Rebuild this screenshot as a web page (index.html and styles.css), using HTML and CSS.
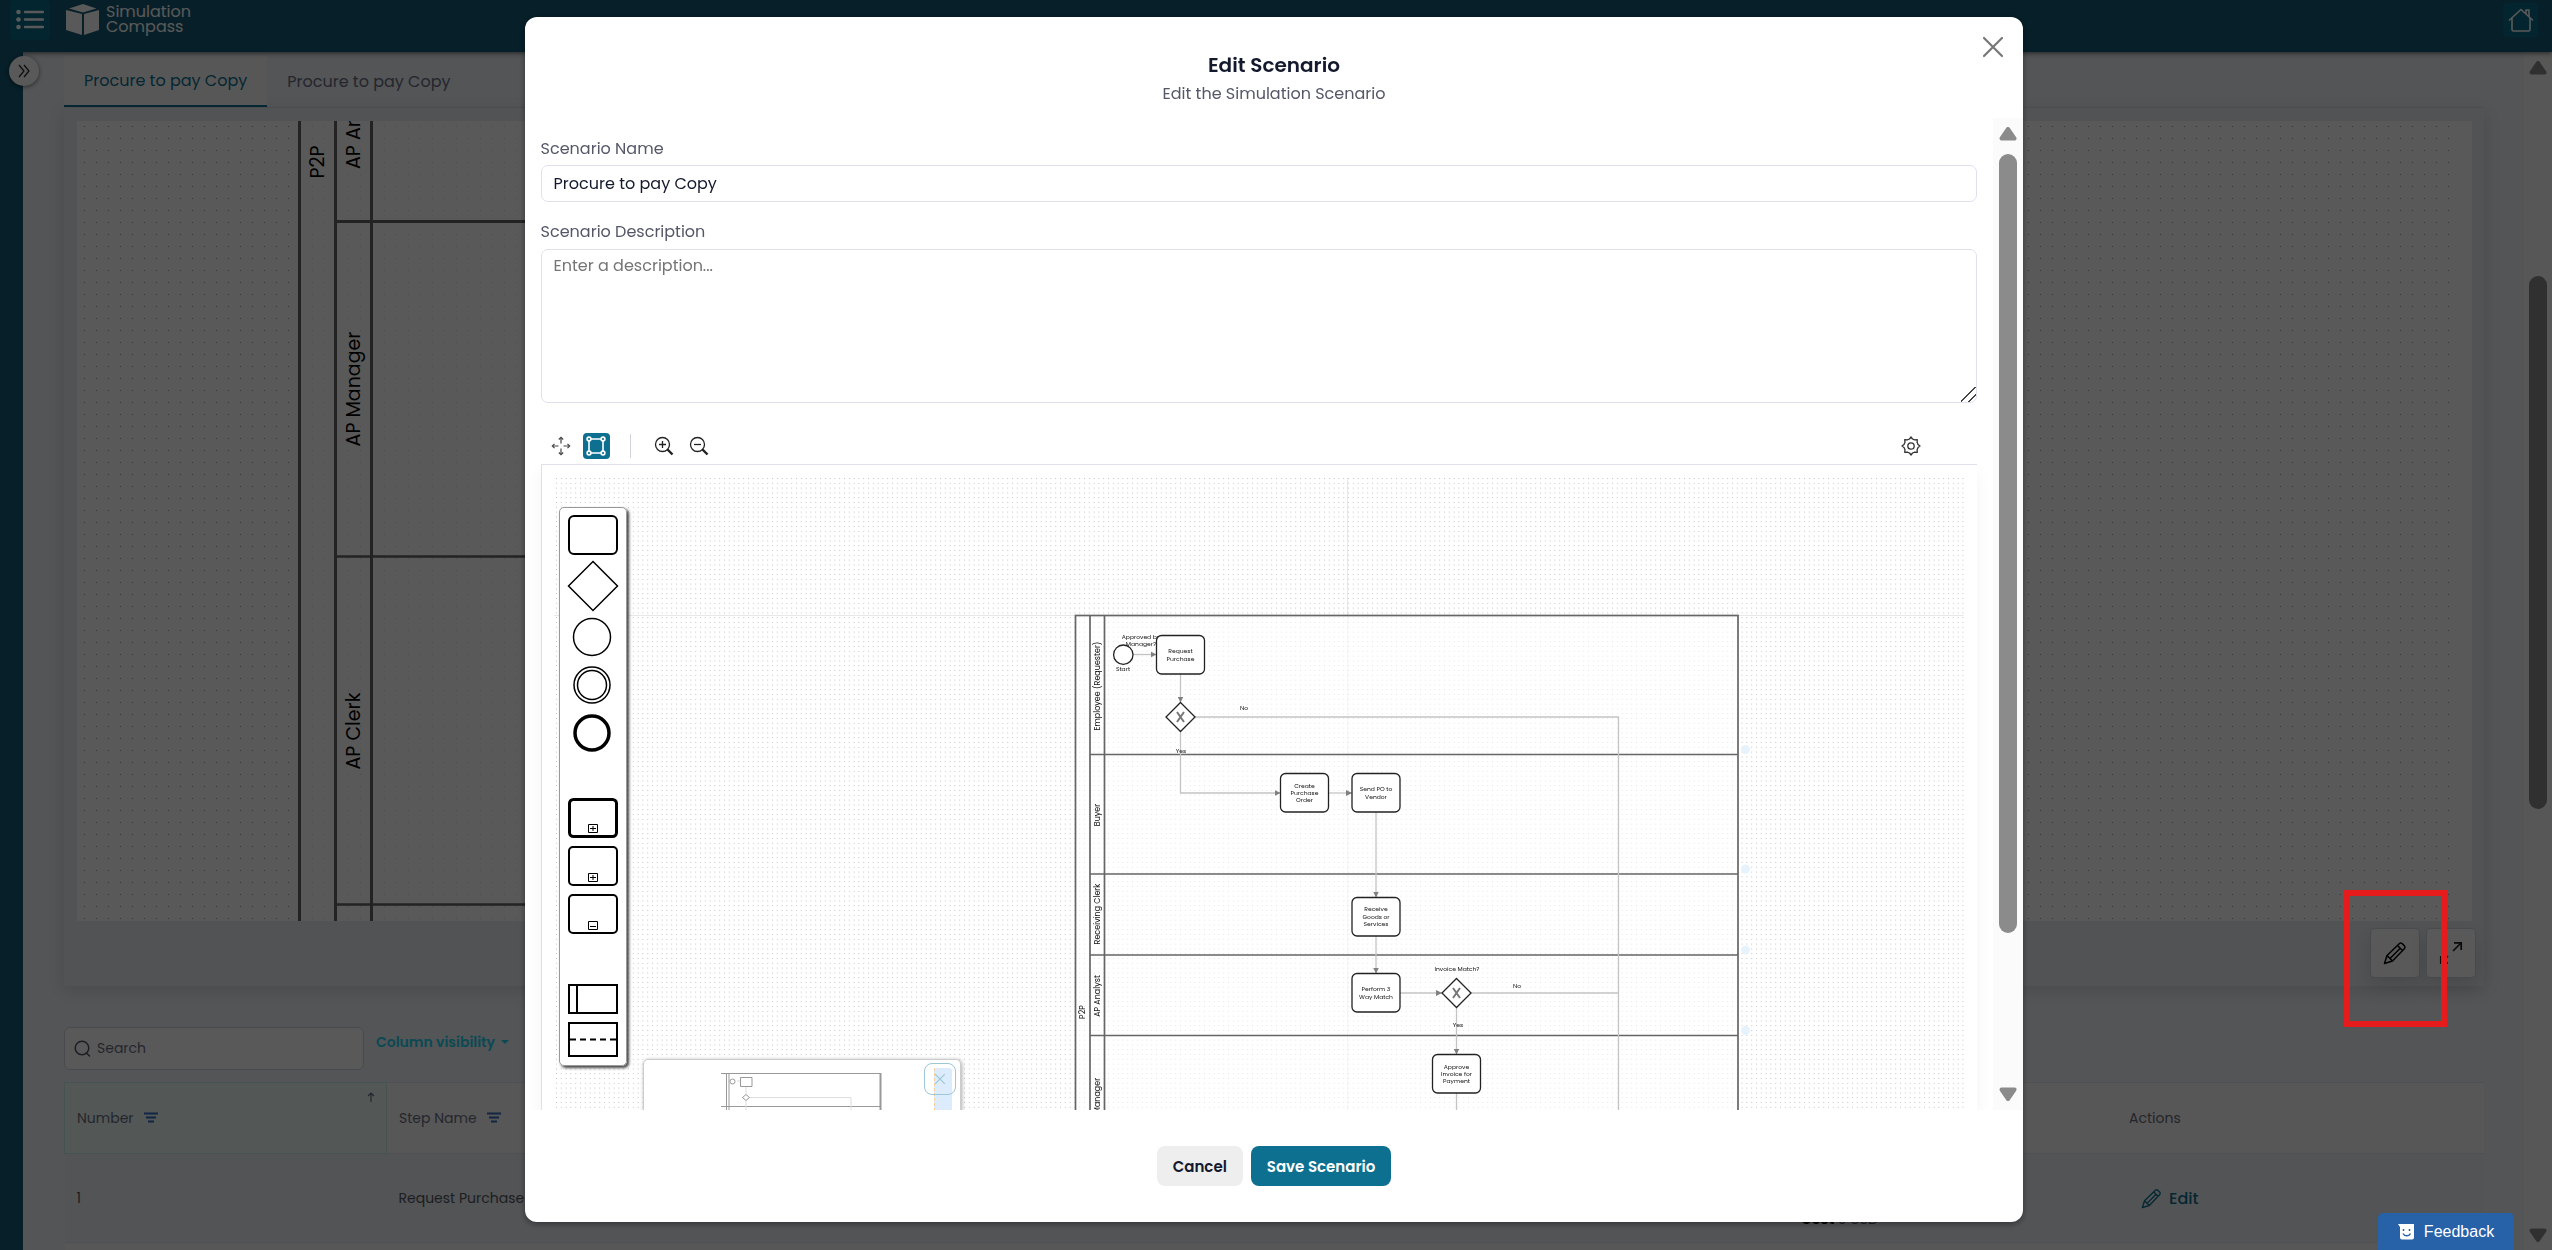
FILE: index.html
```html
<!DOCTYPE html>
<html lang="en">
<head>
<meta charset="utf-8">
<meta name="viewport" content="width=device-width, initial-scale=1">
<title>Simulation Compass</title>
<link rel="stylesheet" href="styles.css">
</head>
<body>
<div class="app">
  <header class="topbar">
    <button class="menu-btn" type="button" aria-label="Menu">
      <svg width="28" height="22" viewBox="0 0 28 22" fill="none" stroke="#fff" stroke-width="2.4" stroke-linecap="round"><path d="M9 3h18M9 10.500h18M9 18h18"/><g fill="#fff" stroke="none"><circle cx="2.500" cy="3" r="2.300"/><circle cx="2.500" cy="10.500" r="2.300"/><circle cx="2.500" cy="18" r="2.300"/></g></svg>
    </button>
    <a class="brand" href="#">
      <svg width="34" height="32" viewBox="0 0 34 32" fill="#fff"><path d="M3 4.500 17 0l13.500 4.500L17 8.500z"/><path d="M0 6l16 4v21L0 26z"/><path d="M18 10l15-4v20l-15 5z"/></svg>
      <span>Simulation<br>Compass</span>
    </a>
    <button class="home-btn" type="button" aria-label="Home">
      <svg width="26" height="25" viewBox="0 0 26 25" fill="none" stroke="#fff" stroke-width="1.600" stroke-linejoin="round" stroke-linecap="round"><path d="M1.500 12 13 1.500 24.500 12M4 10v11.500a1.500 1.500 0 0 0 1.500 1.500h15a1.500 1.500 0 0 0 1.500-1.500V10M18 5.500V2h3v6.500"/></svg>
    </button>
  </header>
  <div class="shell">
    <aside class="sidebar">
      <button class="expand-btn" type="button" aria-label="Expand sidebar">
        <svg width="12" height="14" viewBox="0 0 12 14" fill="none" stroke="#222" stroke-width="1.200"><path d="M1 1l5 6-5 6M6 1l5 6-5 6"/></svg>
      </button>
    </aside>
    <main class="content">
      <nav class="tabs">
        <a class="tab tab-active" href="#">Procure to pay Copy</a>
        <a class="tab" href="#">Procure to pay Copy</a>
      </nav>
      <section class="panel">
        <svg class="panel-canvas">
          <defs>
            <pattern id="dots-lg" width="12" height="12" patternUnits="userSpaceOnUse" x="6" y="4"><rect x="1" y="1" width="1" height="1" fill="#9a9a9a"/></pattern>
          </defs>
          <rect width="100%" height="100%" fill="#fff"/>
          <rect width="99.500%" height="100%" fill="url(#dots-lg)"/>
          <rect x="223" width="1500" height="100%" fill="#fff" fill-opacity=".6"/>
          <g stroke="#666" stroke-width="3"><path d="M222.500 0V800M258.500 0V800M294.500 0V800M258 100.500H1700"/><path stroke-width="2.500" d="M258 435.500H1700M258 783.500H1700"/></g>
          <g class="lane-lg">
            <text transform="translate(247 41) rotate(-90)" text-anchor="middle">P2P</text>
            <text transform="translate(283 48) rotate(-90)">AP Analyst</text>
            <text transform="translate(283 268) rotate(-90)" text-anchor="middle">AP Manager</text>
            <text transform="translate(283 610) rotate(-90)" text-anchor="middle">AP Clerk</text>
          </g>
        </svg>
        <div class="panel-actions">
          <button class="tool" type="button" aria-label="Edit scenario"><svg width="24" height="24" viewBox="0 0 24 24" fill="none" stroke="#000" stroke-width="1.500" stroke-linejoin="round"><path d="M1.500 22.500 4 14.500 16.500 2.500a2 2 0 0 1 2.600 0l2.400 2.400a2 2 0 0 1 0 2.600L9.500 20zM4 14.500 9.500 20M14.500 4.500l5 5M7.500 17 17 7.500"/></svg></button>
          <button class="tool" type="button" aria-label="Full screen"><svg width="24" height="24" viewBox="0 0 24 24" fill="none" stroke="#222" stroke-width="1.700"><path d="M14 10 22 2M15 1.800h7.200V9M9 15l-7 7M1.800 15v7.200H9"/></svg></button>
        </div>
      </section>
      <div class="filters">
        <label class="search"><svg width="17" height="17" viewBox="0 0 17 17" fill="none" stroke="#555768" stroke-width="1.500" stroke-linecap="round"><circle cx="8" cy="8" r="6.800"/><path d="M12.500 13l3 3"/></svg><input type="search" placeholder="Search" aria-label="Search"></label>
        <button class="columns" type="button">Column visibility <svg width="8" height="5" viewBox="0 0 8 5" fill="#22d3f0"><path d="M0 0h8L4 4z"/></svg></button>
      </div>
      <table class="steps">
        <colgroup><col class="c-number"><col><col class="c-detail"><col class="c-actions"></colgroup>
        <thead><tr>
          <th class="sorted"><span>Number</span><svg class="funnel" width="14" height="11" viewBox="0 0 14 11" stroke="#316dc2" stroke-width="2"><path d="M0 1.500h14M2 5.500h10M4 9.500h6"/></svg><svg class="sort" width="8" height="10" viewBox="0 0 8 10" fill="none" stroke="#6b6d80" stroke-width="1.200"><path d="M4 10V1M1 4l3-3 3 3"/></svg></th>
          <th><span>Step Name</span><svg class="funnel" width="14" height="11" viewBox="0 0 14 11" stroke="#316dc2" stroke-width="2"><path d="M0 1.500h14M2 5.500h10M4 9.500h6"/></svg></th>
          <th></th><th><span>Actions</span></th>
        </tr></thead>
        <tbody>
          <tr><td>1</td><td>Request Purchase</td><td class="cost"><b>Cost</b> 0 USD</td>
          <td><a class="edit" href="#"><svg width="21" height="21" viewBox="0 0 24 24" fill="none" stroke="#0e7090" stroke-width="1.500" stroke-linejoin="round"><path d="M1.500 22.500 4 14.500 16.500 2.500a2 2 0 0 1 2.600 0l2.400 2.400a2 2 0 0 1 0 2.600L9.500 20zM4 14.500 9.500 20M14.500 4.500l5 5M7.500 17 17 7.500"/></svg>Edit</a></td></tr>
          <tr><td></td><td></td><td></td><td></td></tr>
        </tbody>
      </table>
    </main>
    <div class="track page-track">
      <svg width="18" height="14" viewBox="0 0 18 14"><path d="M9 2l6.500 9.500h-13z"/></svg>
      <div class="thumb"></div>
      <svg width="18" height="14" viewBox="0 0 18 14"><path d="M9 12l6.500-9.500h-13z"/></svg>
    </div>
  </div>
</div>

<div class="scrim">
  <div class="modal" role="dialog" aria-labelledby="modal-title">
    <div class="modal-head">
      <h1 id="modal-title">Edit Scenario</h1>
      <p>Edit the Simulation Scenario</p>
      <button class="close" type="button" aria-label="Close"><svg width="22" height="22" viewBox="0 0 22 22" stroke="#777" stroke-width="2.200" stroke-linecap="round"><path d="M2 2l18 18M20 2 2 20"/></svg></button>
    </div>
    <div class="modal-body">
      <form class="fields">
        <label for="name">Scenario Name</label>
        <input id="name" type="text" value="Procure to pay Copy">
        <label for="desc">Scenario Description</label>
        <textarea id="desc" placeholder="Enter a description..."></textarea>
        <div class="toolbar">
          <button type="button" aria-label="Pan"><svg width="20" height="20" viewBox="0 0 20 20" fill="none" stroke="#444" stroke-width="1.200"><path d="M10 7.500V2M10 12.500V18M7.500 10H2M12.500 10H18"/><path d="M7.800 3.500 10 1.300l2.200 2.200M7.800 16.500l2.200 2.200 2.200-2.200M3.500 7.800 1.300 10l2.200 2.200M16.500 7.800l2.200 2.200-2.200 2.200"/></svg></button>
          <button class="on" type="button" aria-label="Select"><svg width="20" height="20" viewBox="0 0 20 20" fill="none" stroke="#fff" stroke-width="1.600"><path d="M5 3h10M5 17h10M3 5v10M17 5v10"/><circle cx="3" cy="3" r="1.900"/><circle cx="17" cy="3" r="1.900"/><circle cx="3" cy="17" r="1.900"/><circle cx="17" cy="17" r="1.900"/></svg></button>
          <span class="sep"></span>
          <button type="button" aria-label="Zoom in"><svg width="20" height="20" viewBox="0 0 20 20" fill="none" stroke="#222" stroke-width="1.300"><circle cx="8.500" cy="8.500" r="7"/><path d="M8.500 5v7M5 8.500h7"/><path stroke-width="2.400" d="M13.500 13.500l5 5"/></svg></button>
          <button type="button" aria-label="Zoom out"><svg width="20" height="20" viewBox="0 0 20 20" fill="none" stroke="#222" stroke-width="1.300"><circle cx="8.500" cy="8.500" r="7"/><path d="M5 8.500h7"/><path stroke-width="2.400" d="M13.500 13.500l5 5"/></svg></button>
          <button class="gear" type="button" aria-label="Settings"><svg width="20" height="20" viewBox="0 0 20 20" fill="none" stroke="#333" stroke-width="1.300" stroke-linejoin="round"><circle cx="10" cy="10" r="3.200"/><path d="M8.500 3 10 1l1.500 2 2.200.9 2.600-.3-.2 2.600.9 2.300 2 1.500-2 1.500-.9 2.200.2 2.600-2.600-.2-2.200.9L10 19l-1.500-2-2.200-.9-2.600.2.300-2.600-1-2.200-2-1.500 2-1.500 1-2.300-.3-2.600 2.600.3z"/></svg></button>
        </div>
        <div class="board">
          <svg class="board-svg" aria-label="Process diagram">
            <defs>
              <pattern id="dots-sm" width="4.800" height="4.800" patternUnits="userSpaceOnUse" x="556" y="478"><rect width="1" height="1" fill="#c4c4c4"/></pattern>
              <marker id="tip" viewBox="0 0 6 6" refX="6" refY="3" markerWidth="6" markerHeight="6" markerUnits="userSpaceOnUse" orient="auto"><path d="M0 0l6 3-6 3z" fill="#808080"/></marker>
            </defs>
            <g transform="translate(-542 -465)">
              <rect x="556" y="478" width="1408" height="700" fill="url(#dots-sm)"/>
              <path d="M554 615.500H1964M1347.500 478V1200" stroke="#e8e8e8"/>
              <rect x="1075.500" y="615.500" width="662.500" height="600" fill="#fff" fill-opacity=".55" stroke="#666" stroke-width="1.700"/>
              <path d="M1090 615V1200M1104.500 615V1200M1090 754.500h648M1090 874h648M1090 955h648M1090 1035.500h648" stroke="#666" stroke-width="1.700"/>
              <g class="flow" fill="none">
                <g marker-end="url(#tip)"><path d="M1133 654.500H1156.500"/><path d="M1180.500 674V702.500"/><path d="M1180.500 731.500V793H1280.500"/><path d="M1328.500 793H1352"/><path d="M1376 812V897.500"/><path d="M1376 936V973.500"/><path d="M1400 993H1442"/><path d="M1456.500 1007V1054.500"/></g>
                <path d="M1195 717H1618.500V1200M1471 993H1618.500M1456.500 1093V1200"/>
              </g>
              <g class="small"><text x="1141" y="639">Approved by</text><text x="1141" y="646">Manager?</text></g>
              <g fill="#fff" stroke="#222" stroke-width="1.300">
                <circle cx="1123.300" cy="654.700" r="9.700"/>
                <rect x="1156.500" y="635.500" width="48" height="38.500" rx="5"/>
                <rect x="1280.500" y="773.500" width="48" height="38.500" rx="5"/>
                <rect x="1352" y="773.500" width="48" height="38.500" rx="5"/>
                <rect x="1352" y="897.500" width="48" height="38.500" rx="5"/>
                <rect x="1352" y="973.500" width="48" height="38.500" rx="5"/>
                <rect x="1432.500" y="1054.500" width="48" height="38.500" rx="5"/>
                <path d="M1180.500 702.500 1195 717l-14.500 14.500L1166 717zM1456.500 978.500 1471 993l-14.500 14.500L1442 993z"/>
              </g>
              <path d="M1177 712l7 10M1184 712l-7 10M1453 988l7 10M1460 988l-7 10" stroke="#777" stroke-width="2"/>
              <g class="small">
                <text x="1123" y="671">Start</text>
                <text x="1180.500" y="653">Request</text><text x="1180.500" y="661">Purchase</text>
                <text x="1244" y="710">No</text><text x="1181" y="753">Yes</text>
                <text x="1304.500" y="788">Create</text><text x="1304.500" y="795">Purchase</text><text x="1304.500" y="802">Order</text>
                <text x="1376" y="791">Send PO to</text><text x="1376" y="799">Vendor</text>
                <text x="1376" y="911">Receive</text><text x="1376" y="919">Goods or</text><text x="1376" y="926">Services</text>
                <text x="1376" y="991">Perform 3</text><text x="1376" y="999">Way Match</text>
                <text x="1457" y="971">Invoice Match?</text><text x="1517" y="988">No</text><text x="1458" y="1027">Yes</text>
                <text x="1456.500" y="1069">Approve</text><text x="1456.500" y="1076">Invoice for</text><text x="1456.500" y="1083">Payment</text>
              </g>
              <g class="lane">
                <text transform="translate(1085 1012) rotate(-90)">P2P</text>
                <text transform="translate(1100 686) rotate(-90)">Employee (Requester)</text>
                <text transform="translate(1100 815) rotate(-90)">Buyer</text>
                <text transform="translate(1100 914) rotate(-90)">Receiving Clerk</text>
                <text transform="translate(1100 996) rotate(-90)">AP Analyst</text>
                <text transform="translate(1100 1102) rotate(-90)">AP Manager</text>
              </g>
              <g fill="#e6f3fd"><circle cx="1745.500" cy="749.500" r="4.500"/><circle cx="1745.500" cy="869" r="4.500"/><circle cx="1745.500" cy="950" r="4.500"/><circle cx="1745.500" cy="1030.500" r="4.500"/></g>
            </g>
          </svg>
          <div class="palette" role="toolbar" aria-label="Shapes">
            <button type="button" aria-label="Task"><svg width="50" height="40"><rect x="1" y="1" width="48" height="38" rx="5"/></svg></button>
            <button type="button" aria-label="Gateway"><svg width="50" height="46"><path stroke-width="1.500" d="M25-1.500 49.500 23 25 47.500.5 23z"/></svg></button>
            <button type="button" aria-label="Start event"><svg width="50" height="40"><circle cx="24" cy="20" r="18.500" stroke-width="1.500"/></svg></button>
            <button type="button" aria-label="Intermediate event"><svg width="50" height="40"><g stroke-width="1.500"><circle cx="24" cy="20" r="18"/><circle cx="24" cy="20" r="14.500"/></g></svg></button>
            <button type="button" aria-label="End event"><svg width="50" height="40"><circle cx="24" cy="20" r="17" stroke-width="3.500"/></svg></button>
            <button class="group-a" type="button" aria-label="Call activity"><svg width="50" height="40"><rect x="1.500" y="1.500" width="47" height="37" rx="4" stroke-width="3"/><path stroke-width="1" d="M20.500 26.500h9v8h-9zM25 28v5M22 30.500h6"/></svg></button>
            <button type="button" aria-label="Collapsed subprocess"><svg width="50" height="40"><rect x="1" y="1" width="48" height="38" rx="4"/><path stroke-width="1" d="M20.500 27.500h9v8h-9zM25 29v5M22 31.500h6"/></svg></button>
            <button type="button" aria-label="Expanded subprocess"><svg width="50" height="40"><rect x="1" y="1" width="48" height="38" rx="4"/><path stroke-width="1" d="M20.500 27.500h9v8h-9zM22 32.500h6"/></svg></button>
            <button class="group-b" type="button" aria-label="Pool"><svg width="50" height="30"><path d="M1 1h48v28H1zM9 1v28"/></svg></button>
            <button type="button" aria-label="Lane divider"><svg width="50" height="35"><path d="M1 1h48v33H1z"/><path d="M2 17.500h48" stroke-dasharray="6 4"/></svg></button>
          </div>
          <div class="overview">
            <svg width="316" height="150" fill="none" stroke="#999"><path d="M77 13.500h160M82.500 13v140M85 13v140M77 46.500h160"/><path stroke-width="2" d="M236.500 13v140"/><path stroke="#ddd" d="M93 21h4M102 26v8M106 37.500h101V150M102 41v100"/><circle cx="88.500" cy="21.500" r="2.500"/><path d="M96.500 17.500h11.500v9h-11.500zM98.500 37.500l3.500-3 3.500 3-3.500 3z"/><rect x="290" y="8" width="18" height="150" rx="3" fill="#dcecfc" stroke="none"/><path stroke="#f6cf9a" stroke-dasharray="3 2" d="M290.500 8v140"/></svg>
            <button type="button" aria-label="Close overview"><svg width="10" height="10" viewBox="0 0 10 10" stroke="#9cc7d6" stroke-width="1.200"><path d="M0 0l10 10M10 0 0 10"/></svg></button>
          </div>
        </div>
      </form>
      <div class="track modal-track">
        <svg width="18" height="14" viewBox="0 0 18 14"><path d="M9 2l6.500 9.500h-13z"/></svg>
        <div class="thumb"></div>
        <svg width="18" height="14" viewBox="0 0 18 14"><path d="M9 12l6.500-9.500h-13z"/></svg>
      </div>
    </div>
    <div class="modal-foot">
      <button class="btn" type="button">Cancel</button>
      <button class="btn btn-primary" type="button">Save Scenario</button>
    </div>
  </div>
</div>
<div class="highlight"></div>
<button class="feedback" type="button"><svg width="16" height="16" viewBox="0 0 16 16"><path d="M0 0h16v13.500a2 2 0 0 1-2 2H4a2 2 0 0 1-2-2V3z" fill="#fff"/><path d="M5.500 5v2M11.500 5v2M5 9.500c1.500 3 6 3 7.500 0" fill="none" stroke="#2761a8" stroke-width="1.500"/></svg>Feedback</button>
</body>
</html>
```
FILE: styles.css
```css
* { box-sizing: border-box; }
body { margin: 0; height: 100vh; overflow: hidden; font-family: Poppins, Inter, sans-serif; font-size: 16px; color: #555768; }
button { font: inherit; border: 0; background: none; padding: 0; margin: 0; display: flex; align-items: center; justify-content: center; cursor: pointer; }
a { color: inherit; text-decoration: none; }
svg { display: block; flex: none; }

.app { height: 100vh; display: flex; flex-direction: column; overflow: hidden; background: #edf2f6; }
.topbar { flex: none; height: 52px; padding: 0 14px 0 10px; display: flex; align-items: flex-start; background: #145972; box-shadow: 0 1px 5px rgba(0, 0, 0, .6); z-index: 1; }
.menu-btn { width: 40px; height: 40px; background: #0a6a88; border-radius: 4px; }
.brand { display: flex; gap: 6px; margin: 4px 0 0 16px; color: #fff; line-height: 15px; font-size: 16px; }
.home-btn { width: 35px; height: 34px; margin: 3px 0 0 auto; background: #0a6a88; border-radius: 4px; }

.shell { flex: 1; min-height: 0; display: flex; }
.sidebar { flex: none; width: 23px; padding: 4px 0 0 9px; background: #145972; z-index: 1; }
.expand-btn { width: 30px; height: 30px; border-radius: 50%; background: #fff; box-shadow: 0 1px 4px rgba(0, 0, 0, .5); }
.content { flex: 1; min-width: 0; padding: 0 40px 0 41px; }
.tabs { display: flex; height: 56px; padding-top: 3px; border-bottom: 1px solid #dde2ea; }
.tab { padding: 0 20px; line-height: 53px; color: #6b6d84; }
.tab-active { background: #fbfaf9; color: #0e7090; border-bottom: 2px solid #0e7090; line-height: 51px; }
.panel { padding: 13px 12px 0 13px; background: #e9eef3; box-shadow: 0 4px 16px rgba(0, 0, 0, .12); }
.panel-canvas { width: 100%; height: 800px; }
.lane-lg { font-size: 19px; fill: #000; }
.panel-actions { display: flex; justify-content: flex-end; gap: 6px; height: 65px; padding-top: 7px; margin-right: -4px; }
.tool { width: 50px; height: 50px; border: 1px solid #d0d4e0; border-radius: 4px; background: #fff; box-shadow: 0 8px 20px rgba(0, 0, 0, .12); }

.filters { display: flex; gap: 12px; margin: 41px 0 12px; height: 43px; }
.search { width: 300px; display: flex; align-items: center; gap: 6px; padding-left: 9px; border: 1px solid #d0d4e0; border-radius: 6px; background: #fff; }
.search input { border: 0; outline: 0; background: none; font: inherit; font-size: 14px; width: 240px; padding: 0; margin-left: 0; }
.search input::placeholder { color: #6b6d80; }
.columns { height: 30px; gap: 6px; color: #22d3f0; font-size: 14px; font-weight: 600; }

.steps { width: 100%; table-layout: fixed; border-collapse: collapse; font-size: 14px; }
.c-number { width: 322px; }
.c-detail { width: 328px; }
.c-actions { width: 367px; }
.steps th { position: relative; height: 71px; padding: 0 12px; text-align: left; font-weight: 400; color: #6b6d80; background: #faf9f9; border-bottom: 1px solid #dfe4ea; border-top: 1px solid #dfe4ea; }
.steps th span, .funnel { display: inline-block; }
.funnel { margin-left: 10px; }
.steps .sorted { background: #edfbfa; border: 1px solid #c8eeea; }
.sort { position: absolute; top: 9px; right: 11px; }
.steps td { height: 89px; padding: 0 12px; color: #555768; background: #ebf0f3; border-bottom: 1px solid #dfe4ea; }
.steps tr + tr td { background: #faf9f9; }
.steps .cost { vertical-align: bottom; padding-bottom: 12px; }
.cost b { color: #000; }
.edit { display: flex; align-items: center; gap: 7px; padding-left: 12px; font-size: 16px; font-weight: 500; color: #0e7090; }

.track { flex: none; display: flex; flex-direction: column; align-items: center; }
.track path { fill: #8b8b8b; stroke: #8b8b8b; stroke-width: 4px; stroke-linejoin: round; }
.thumb { width: 18px; border-radius: 9px; background: #8b8b8b; }
.page-track { width: 28px; padding: 9px 0 8px; background: #faf9f8; }
.page-track .thumb { flex: 533; margin: 201px 0 419px; }
.modal-track { width: 30px; padding: 9px 0; background: #fbfbfb; }
.modal-track .thumb { flex: 1; margin: 13px 0 154px; }

.scrim { position: fixed; inset: 0; z-index: 5; display: flex; justify-content: center; padding: 17px 29px 28px 25px; background: rgba(0, 0, 0, .65); }
.modal { width: 60%; display: flex; flex-direction: column; background: #fff; border-radius: 12px; overflow: hidden; box-shadow: 0 2px 6px rgba(0, 0, 0, .4); }
.modal-head { position: relative; padding: 36px 0 11px; text-align: center; }
.modal-head h1 { margin: 0; font-size: 20px; line-height: 24px; font-weight: 600; color: #141a2e; }
.modal-head p { margin: 4px 0 0; line-height: 26px; }
.close { position: absolute; top: 19px; right: 19px; }
.modal-body { flex: 1; min-height: 0; display: flex; overflow: hidden; }
.fields { flex: 1; min-width: 0; display: flex; flex-direction: column; padding: 19px 16px 0; }
.fields label { line-height: 24px; }
.fields input, .fields textarea { flex: none; width: 100%; padding: 0 12px; border: 1px solid #dfe0ec; border-radius: 7px; outline: 0; background: #fff; font: inherit; color: #141a2e; }
.fields input { height: 37px; margin: 4px 0 18px; }
.fields textarea { height: 154px; margin: 5px 0 30px; padding-top: 4px; line-height: 24px; }
.fields textarea::placeholder { color: #757575; }
.fields textarea::-webkit-resizer { background: linear-gradient(135deg, transparent 45%, #444 45%, #444 52%, transparent 52%, transparent 72%, #444 72%, #444 79%, transparent 79%); }
.toolbar { display: flex; gap: 8px; padding: 0 53px 0 7px; margin-bottom: 5px; }
.toolbar button { width: 27px; height: 26px; border-radius: 4px; }
.toolbar .on { background: #0e7090; }
.sep { width: 1px; margin: 1px 12px; background: #d0d3dc; }
.toolbar .gear { margin-left: auto; }
.board { position: relative; flex: 1; min-height: 0; border: 1px solid #dfe0ec; border-width: 1px 0 0 1px; box-shadow: 0 8px 16px rgba(0, 0, 0, .05); background: #fff; clip-path: inset(0 -16px 0 -16px); }
.board-svg { position: absolute; inset: 0; width: 100%; height: 100%; }
.flow { stroke: #c4c4c4; stroke-width: 1.3px; }
.small { font-size: 6px; fill: #111; text-anchor: middle; }
.lane { font-size: 8px; fill: #111; text-anchor: middle; }
.palette { position: absolute; left: 17px; top: 42px; width: 68px; display: flex; flex-direction: column; align-items: center; gap: 8px; padding: 7px 0 8px; border: 1px solid #999; border-radius: 5px; background: rgba(255, 255, 255, .95); box-shadow: 2px 2px 3px #444; }
.palette svg { overflow: visible; fill: none; stroke: #000; stroke-width: 2px; }
.group-a { margin-top: 37px; }
.group-b { margin-top: 42px; }
.overview { position: absolute; left: 101px; top: 594px; width: 318px; height: 160px; border: 1px solid #ccc; border-radius: 5px; background: #fff; box-shadow: 1px 1px 4px #aaa; }
.overview button { position: absolute; top: 3px; right: 4px; width: 32px; height: 32px; border: 1px solid #9cc7d6; border-radius: 8px; }
.modal-foot { display: flex; justify-content: center; gap: 8px; padding: 36px 0; }
.btn { height: 40px; padding: 0 16px; border-radius: 8px; background: #eee; color: #141a2e; font-size: 15px; font-weight: 600; }
.btn-primary { background: #0e7090; color: #fff; }

.highlight { position: fixed; z-index: 6; right: 105px; top: 890px; width: 103px; height: 137px; border: 6px solid #e61c1c; }
.feedback { position: fixed; z-index: 6; right: 38px; bottom: 0; width: 136px; height: 37px; gap: 10px; border-radius: 5px 5px 0 0; background: #2761a8; color: #fff; font: 16px "Liberation Sans", Arial, sans-serif; }
```
